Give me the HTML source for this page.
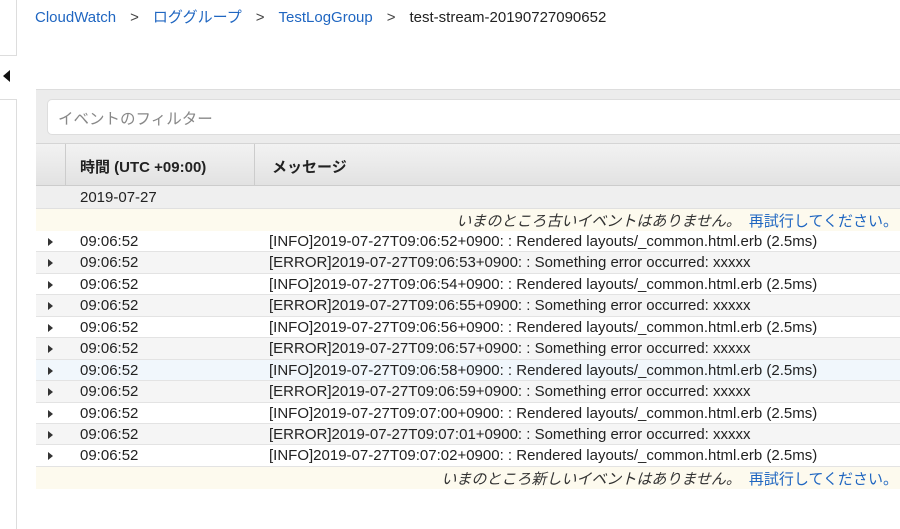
<!DOCTYPE html>
<html><head><meta charset="utf-8"><style>
*{margin:0;padding:0;box-sizing:border-box}
body{width:900px;height:522px;background:#fff;font-family:"Liberation Sans","Noto Sans CJK JP",sans-serif;color:#222;position:relative;overflow:hidden;font-size:15px}
.lp1{position:absolute;left:0;top:0;width:17px;height:56px;border-right:1px solid #ddd;border-bottom:1px solid #ddd}
.lp2{position:absolute;left:0;top:99px;width:17px;height:430px;border-right:1px solid #ddd;border-top:1px solid #ddd}
.tri{position:absolute;left:3px;top:70px;width:0;height:0;border-top:6px solid transparent;border-bottom:6px solid transparent;border-right:7px solid #111}
.bc{position:absolute;left:35px;top:6px;font-size:15px;white-space:nowrap}
.bc a{color:#1f66c1;text-decoration:none}
.bc .s{color:#444;margin:0 14px 0 14px}
.wrap{position:absolute;left:36px;top:89px;width:864px}
.fbar{height:54px;background:#ececec;border-top:1px solid #ddd;padding:9px 0 0 11px}
.fin{height:36px;background:#fff;border:1px solid #ddd;border-right:none;border-radius:5px 0 0 5px;color:#888;font-size:15.5px;padding:7px 0 0 10px}
.hdr{height:43px;background:linear-gradient(#f2f2f2,#e2e2e2);border-top:1px solid #d5d5d5;border-bottom:1px solid #ccc;position:relative;font-weight:bold;font-size:15px}
.hdr .c1{position:absolute;left:29px;top:0;height:42px;border-left:1px solid #ccc}
.hdr .c2{position:absolute;left:218px;top:0;height:42px;border-left:1px solid #ccc}
.hdr .t1{position:absolute;left:44px;top:12px}
.hdr .t2{position:absolute;left:236px;top:12px}
.date{height:23px;background:#efefef;padding:3px 0 0 44px;border-bottom:1px solid #e0e0e0}
.note{height:22px;background:#fdfaee;text-align:right;padding:1px 2px 0 0;font-style:italic;color:#333;font-size:15px;white-space:nowrap}
.note a{color:#1f66c1;font-style:normal;margin-left:8px}
.row{height:21.45px;border-bottom:1px solid #e3e3e3;position:relative;font-size:15px;white-space:nowrap}
.row.g{background:#f5f5f5}.row.b{background:#f1f7fc}
.row .ar{position:absolute;left:12px;top:7px;width:0;height:0;border-top:4px solid transparent;border-bottom:4px solid transparent;border-left:5px solid #333}
.row .t{position:absolute;left:44px;top:2px}
.row .m{position:absolute;left:233px;top:2px}
</style></head><body>
<div class="lp1"></div><div class="lp2"></div><div class="tri"></div>
<div class="bc"><a>CloudWatch</a><span class="s">&gt;</span><a>ロググループ</a><span class="s">&gt;</span><a>TestLogGroup</a><span class="s">&gt;</span>test-stream-20190727090652</div>
<div class="wrap">
<div class="fbar"><div class="fin">イベントのフィルター</div></div>
<div class="hdr"><div class="c1"></div><div class="c2"></div><span class="t1">時間 (UTC +09:00)</span><span class="t2">メッセージ</span></div>
<div class="date">2019-07-27</div>
<div class="note">いまのところ古いイベントはありません。<a>再試行してください。</a></div>
<div class="row"><i class="ar"></i><span class="t">09:06:52</span><span class="m">[INFO]2019-07-27T09:06:52+0900: : Rendered layouts/_common.html.erb (2.5ms)</span></div>
<div class="row g"><i class="ar"></i><span class="t">09:06:52</span><span class="m">[ERROR]2019-07-27T09:06:53+0900: : Something error occurred: xxxxx</span></div>
<div class="row"><i class="ar"></i><span class="t">09:06:52</span><span class="m">[INFO]2019-07-27T09:06:54+0900: : Rendered layouts/_common.html.erb (2.5ms)</span></div>
<div class="row g"><i class="ar"></i><span class="t">09:06:52</span><span class="m">[ERROR]2019-07-27T09:06:55+0900: : Something error occurred: xxxxx</span></div>
<div class="row"><i class="ar"></i><span class="t">09:06:52</span><span class="m">[INFO]2019-07-27T09:06:56+0900: : Rendered layouts/_common.html.erb (2.5ms)</span></div>
<div class="row g"><i class="ar"></i><span class="t">09:06:52</span><span class="m">[ERROR]2019-07-27T09:06:57+0900: : Something error occurred: xxxxx</span></div>
<div class="row b"><i class="ar"></i><span class="t">09:06:52</span><span class="m">[INFO]2019-07-27T09:06:58+0900: : Rendered layouts/_common.html.erb (2.5ms)</span></div>
<div class="row g"><i class="ar"></i><span class="t">09:06:52</span><span class="m">[ERROR]2019-07-27T09:06:59+0900: : Something error occurred: xxxxx</span></div>
<div class="row"><i class="ar"></i><span class="t">09:06:52</span><span class="m">[INFO]2019-07-27T09:07:00+0900: : Rendered layouts/_common.html.erb (2.5ms)</span></div>
<div class="row g"><i class="ar"></i><span class="t">09:06:52</span><span class="m">[ERROR]2019-07-27T09:07:01+0900: : Something error occurred: xxxxx</span></div>
<div class="row"><i class="ar"></i><span class="t">09:06:52</span><span class="m">[INFO]2019-07-27T09:07:02+0900: : Rendered layouts/_common.html.erb (2.5ms)</span></div>
<div class="note">いまのところ新しいイベントはありません。<a>再試行してください。</a></div>
</div>
</body></html>
